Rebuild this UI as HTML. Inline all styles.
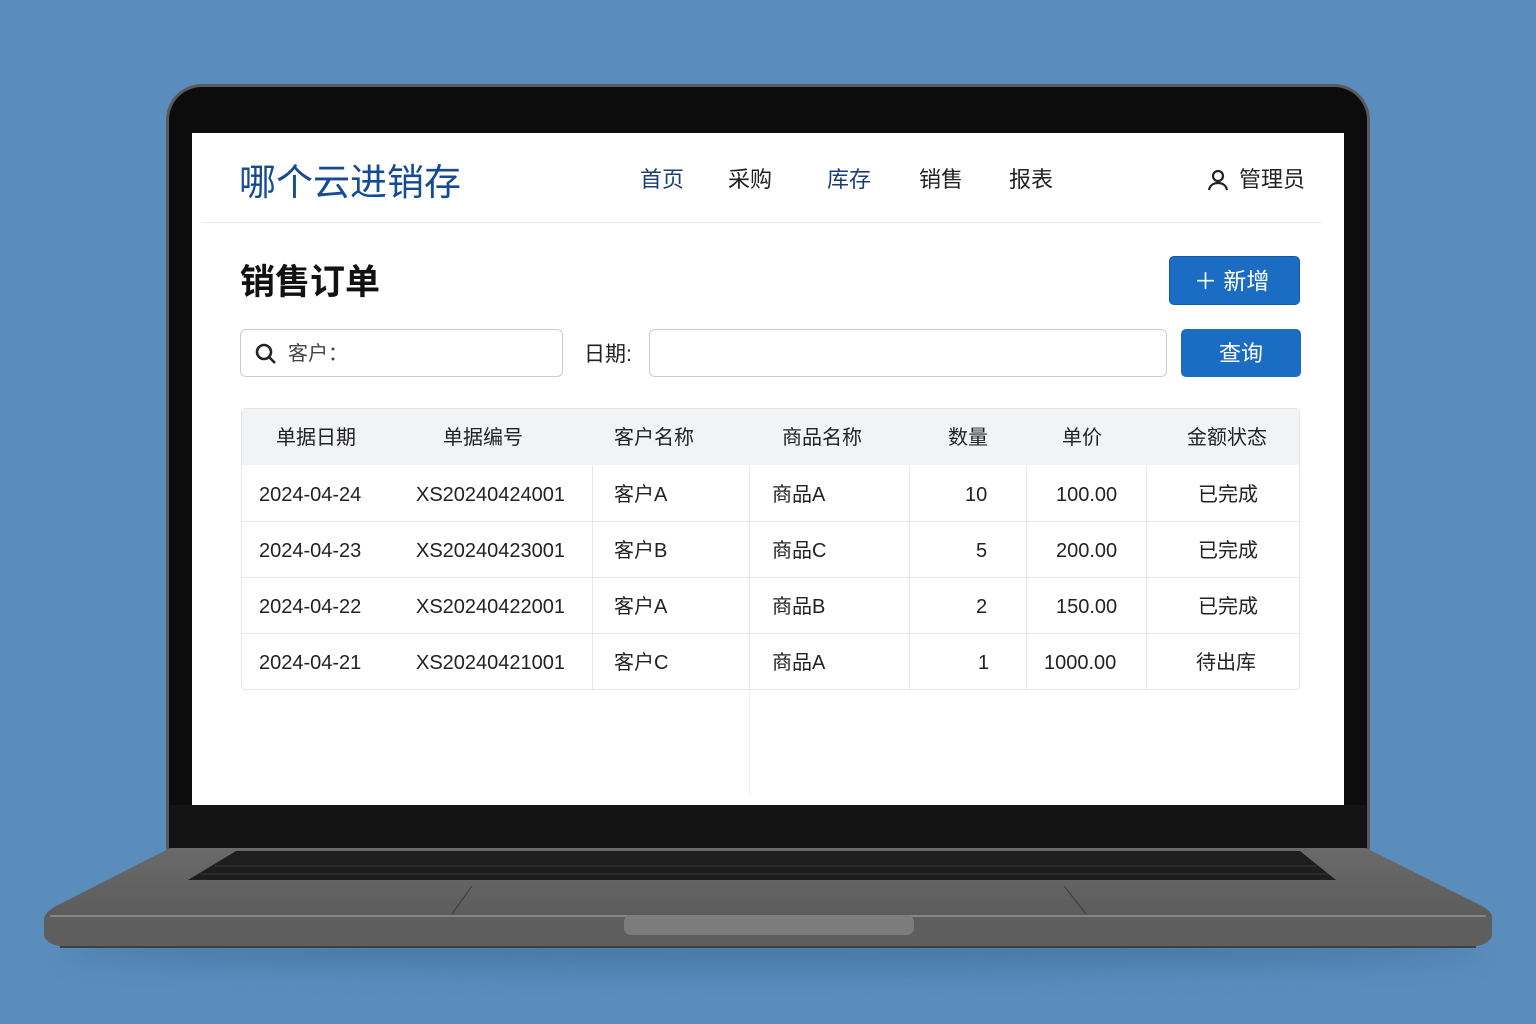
<!DOCTYPE html>
<html><head><meta charset="utf-8"><style>
*{margin:0;padding:0;box-sizing:border-box;line-height:1}
body{width:1536px;height:1024px;background:#5a8dbc;position:relative;overflow:hidden;font-family:"Liberation Sans","Noto Sans CJK SC",sans-serif}
.a{position:absolute}
.lid{left:166px;top:84px;width:1204px;height:770px;background:#0c0c0c;border-radius:36px 36px 0 0;border:3px solid #5a5a5a;border-bottom:none}
.screen{left:192px;top:133px;width:1152px;height:672px;background:#fff}
.chin{left:170px;top:805px;width:1196px;height:45px;background:#141414}
.t{position:absolute;white-space:nowrap}
.nav{font-size:22px;color:#1c3e75;top:36px}
.row{position:absolute;left:241px;width:1059px;height:56px;border-bottom:1px solid #e6e6e6;font-size:20px;color:#222}
.row span{position:absolute;top:19px;white-space:nowrap}
.vl{position:absolute;top:0;width:1px;height:56px;background:#e6e6e6}
.h{position:absolute;top:428px;font-size:20px;color:#222;white-space:nowrap}
</style></head><body>
<div class="a" style="left:60px;top:930px;width:1420px;height:40px;background:#4a7aa6;filter:blur(12px);border-radius:50%"></div>
<div class="a lid"></div>
<div class="a chin"></div>
<div class="a screen">
  <div class="t" style="left:47px;top:31px;font-size:37px;color:#154a94">哪个云进销存</div>
  <div class="t nav" style="left:448px">首页</div>
  <div class="t nav" style="left:536px;color:#222">采购</div>
  <div class="t nav" style="left:635px">库存</div>
  <div class="t nav" style="left:727px;color:#222">销售</div>
  <div class="t nav" style="left:817px;color:#222">报表</div>
  <svg class="a" style="left:1014px;top:35px" width="24" height="24" viewBox="0 0 24 24" fill="none" stroke="#222" stroke-width="2.2"><circle cx="12" cy="8" r="5"/><path d="M3 22c1-5 5-7 9-7s8 2 9 7"/></svg>
  <div class="t" style="left:1047px;top:36px;font-size:22px;color:#222">管理员</div>
  <div class="a" style="left:10px;top:89px;width:1120px;height:1px;background:#e8e8e8"></div>
  <div class="t" style="left:48px;top:132px;font-size:35px;font-weight:bold;color:#111">销售订单</div>
  <div class="a" style="left:977px;top:123px;width:131px;height:49px;background:#1a6dc2;border-radius:5px;border:1px solid #145aa5"></div>
  <div class="t" style="left:1002px;top:137px;font-size:23px;color:#fff">＋ 新增</div>
  <div class="a" style="left:48px;top:196px;width:323px;height:48px;border:1.5px solid #ccc;border-radius:6px"></div>
  <svg class="a" style="left:62px;top:209px" width="24" height="24" viewBox="0 0 24 24" fill="none" stroke="#222" stroke-width="2.6"><circle cx="10" cy="10" r="7"/><path d="M15 15l6 6"/></svg>
  <div class="t" style="left:96px;top:211px;font-size:20px;color:#444">客户：</div>
  <div class="t" style="left:392px;top:211px;font-size:21px;color:#222">日期:</div>
  <div class="a" style="left:457px;top:196px;width:518px;height:48px;border:1.5px solid #ccc;border-radius:6px"></div>
  <div class="a" style="left:989px;top:196px;width:120px;height:48px;background:#1a6dc2;border-radius:5px"></div>
  <div class="t" style="left:1027px;top:210px;font-size:22px;color:#fff">查询</div>
</div>
<div class="a" style="left:241px;top:408px;width:1059px;height:282px;border:1px solid #e6e6e6;border-radius:4px"></div>
<div class="a" style="left:242px;top:409px;width:1057px;height:56px;background:#f2f3f5"></div>
<div class="h" style="left:276px">单据日期</div>
<div class="h" style="left:443px">单据编号</div>
<div class="h" style="left:614px">客户名称</div>
<div class="h" style="left:782px">商品名称</div>
<div class="h" style="left:948px">数量</div>
<div class="h" style="left:1062px">单价</div>
<div class="h" style="left:1187px">金额状态</div>

<div class="row" style="top:466px"><div class="vl" style="left:351px"></div><div class="vl" style="left:508px"></div><div class="vl" style="left:668px"></div><div class="vl" style="left:785px"></div><div class="vl" style="left:905px"></div>
<span style="left:18px">2024-04-24</span><span style="left:175px">XS20240424001</span><span style="left:373px">客户A</span><span style="left:531px">商品A</span><span style="left:724px">10</span><span style="left:815px">100.00</span><span style="left:957px">已完成</span></div>
<div class="row" style="top:522px"><div class="vl" style="left:351px"></div><div class="vl" style="left:508px"></div><div class="vl" style="left:668px"></div><div class="vl" style="left:785px"></div><div class="vl" style="left:905px"></div>
<span style="left:18px">2024-04-23</span><span style="left:175px">XS20240423001</span><span style="left:373px">客户B</span><span style="left:531px">商品C</span><span style="left:735px">5</span><span style="left:815px">200.00</span><span style="left:957px">已完成</span></div>
<div class="row" style="top:578px"><div class="vl" style="left:351px"></div><div class="vl" style="left:508px"></div><div class="vl" style="left:668px"></div><div class="vl" style="left:785px"></div><div class="vl" style="left:905px"></div>
<span style="left:18px">2024-04-22</span><span style="left:175px">XS20240422001</span><span style="left:373px">客户A</span><span style="left:531px">商品B</span><span style="left:735px">2</span><span style="left:815px">150.00</span><span style="left:957px">已完成</span></div>
<div class="row" style="top:634px;border-bottom:none"><div class="vl" style="left:351px"></div><div class="vl" style="left:508px"></div><div class="vl" style="left:668px"></div><div class="vl" style="left:785px"></div><div class="vl" style="left:905px"></div>
<span style="left:18px">2024-04-21</span><span style="left:175px">XS20240421001</span><span style="left:373px">客户C</span><span style="left:531px">商品A</span><span style="left:737px">1</span><span style="left:803px">1000.00</span><span style="left:955px">待出库</span></div>
<div class="a" style="left:749px;top:690px;width:1px;height:105px;background:#eee"></div>

<svg class="a" style="left:0;top:840px" width="1536" height="120" viewBox="0 840 1536 120">
  <defs><linearGradient id="g" x1="0" y1="0" x2="0" y2="1"><stop offset="0" stop-color="#6a6a6a"/><stop offset="1" stop-color="#565656"/></linearGradient></defs>
  <path d="M170 848 H1366 L1480 905 Q1494 912 1492 920 V935 Q1490 945 1470 947 H66 Q46 945 44 935 V920 Q44 912 58 905 Z" fill="url(#g)"/>
  <path d="M44 917 H1492 V935 Q1490 945 1470 947 H66 Q46 945 44 935 Z" fill="#5e5e5e"/>
  <path d="M50 916 H1486" stroke="#858585" stroke-width="2"/>
  <path d="M236 851 H1300 L1336 880 H188 Z" fill="#1e1e1e"/>
  <path d="M215 866 H1318 M200 874 H1328" stroke="#2e2e2e" stroke-width="1.5"/>
  <path d="M472 886 L452 914 M1064 886 L1086 914" stroke="#3a3a3a" stroke-width="1"/>
  <rect x="624" y="915" width="290" height="20" rx="7" fill="#7c7c7c"/>
  <path d="M60 947 H1476" stroke="#3f3f3f" stroke-width="2"/>
</svg>
</body></html>
